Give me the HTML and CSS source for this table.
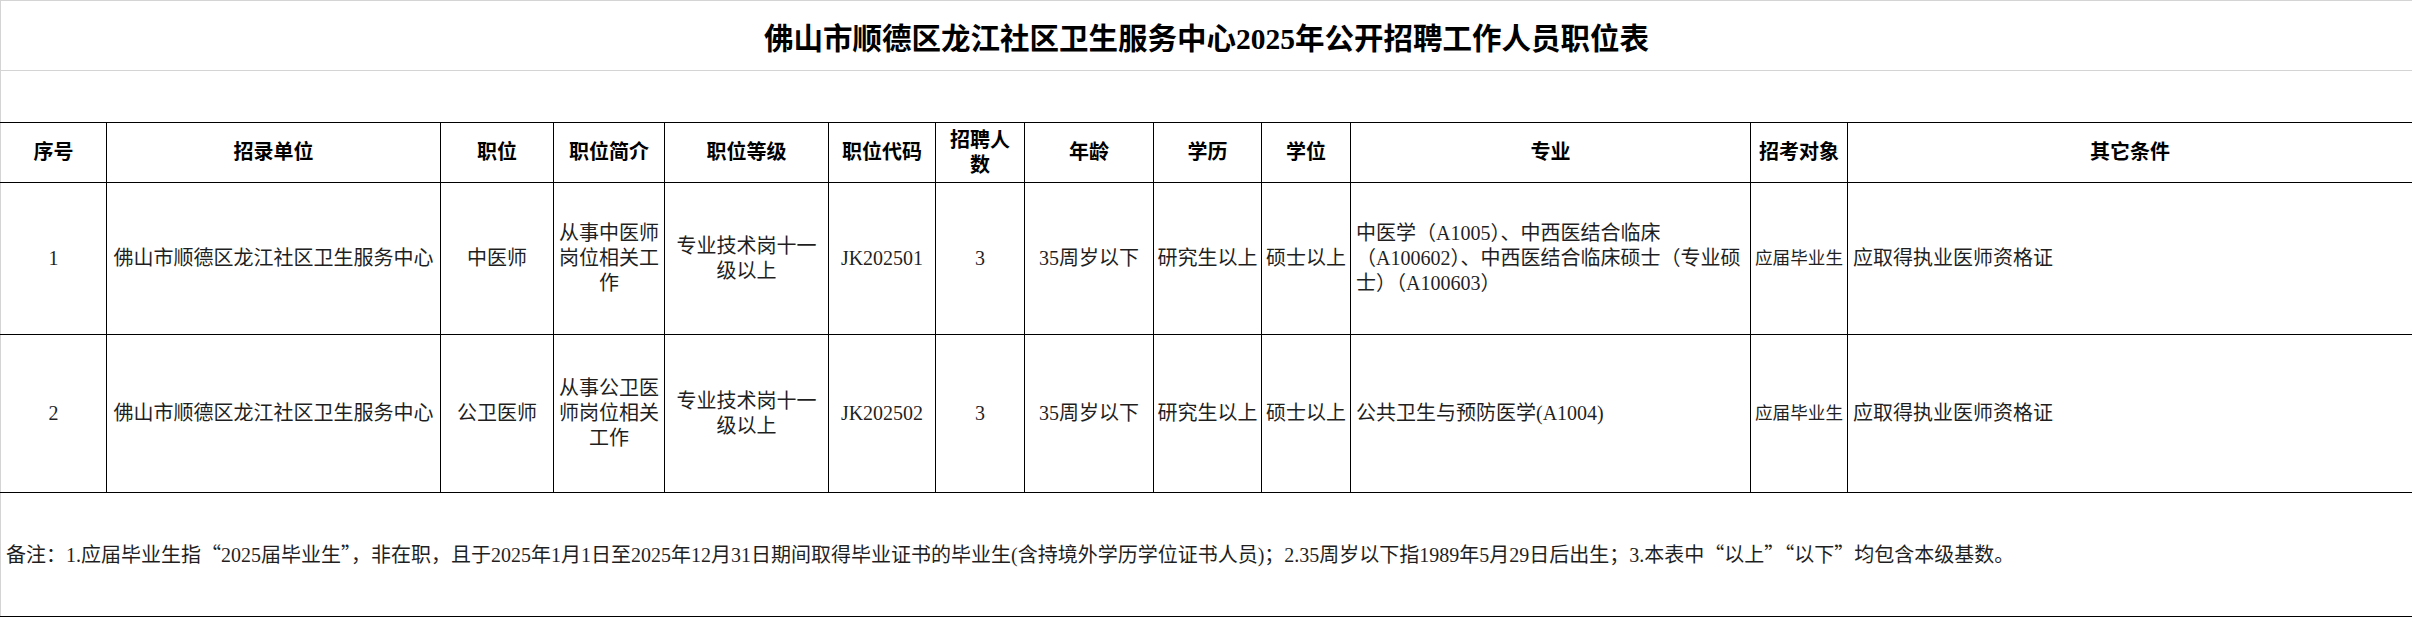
FILE: index.html
```html
<!DOCTYPE html>
<html lang="zh-CN">
<head>
<meta charset="utf-8">
<title>佛山市顺德区龙江社区卫生服务中心2025年公开招聘工作人员职位表</title>
<link rel="stylesheet" href="styles.css">
</head>
<body>
<table class="sheet">
  <colgroup>
    <col class="c-no">
    <col class="c-unit">
    <col class="c-post">
    <col class="c-desc">
    <col class="c-grade">
    <col class="c-code">
    <col class="c-num">
    <col class="c-age">
    <col class="c-edu">
    <col class="c-deg">
    <col class="c-major">
    <col class="c-target">
    <col class="c-other">
  </colgroup>
  <tr class="r-title">
    <td colspan="13" class="title">佛山市顺德区龙江社区卫生服务中心2025年公开招聘工作人员职位表</td>
  </tr>
  <tr class="r-blank">
    <td colspan="13" class="blank"></td>
  </tr>
  <tr class="r-head">
    <th class="first">序号</th>
    <th>招录单位</th>
    <th>职位</th>
    <th>职位简介</th>
    <th>职位等级</th>
    <th>职位代码</th>
    <th>招聘人<br>数</th>
    <th>年龄</th>
    <th>学历</th>
    <th>学位</th>
    <th>专业</th>
    <th>招考对象</th>
    <th>其它条件</th>
  </tr>
  <tr class="r-one">
    <td class="first">1</td>
    <td>佛山市顺德区龙江社区卫生服务中心</td>
    <td>中医师</td>
    <td>从事中医师<br>岗位相关工<br>作</td>
    <td>专业技术岗十一<br>级以上</td>
    <td>JK202501</td>
    <td>3</td>
    <td>35周岁以下</td>
    <td>研究生以上</td>
    <td>硕士以上</td>
    <td class="left">中医学（A1005）、中西医结合临床<br>（A100602）、中西医结合临床硕士（专业硕<br>士）（A100603）</td>
    <td class="shrink">应届毕业生</td>
    <td class="left">应取得执业医师资格证</td>
  </tr>
  <tr class="r-two">
    <td class="first">2</td>
    <td>佛山市顺德区龙江社区卫生服务中心</td>
    <td>公卫医师</td>
    <td>从事公卫医<br>师岗位相关<br>工作</td>
    <td>专业技术岗十一<br>级以上</td>
    <td>JK202502</td>
    <td>3</td>
    <td>35周岁以下</td>
    <td>研究生以上</td>
    <td>硕士以上</td>
    <td class="left">公共卫生与预防医学(A1004)</td>
    <td class="shrink">应届毕业生</td>
    <td class="left">应取得执业医师资格证</td>
  </tr>
  <tr class="r-note">
    <td colspan="13" class="first left note">备注：1.应届毕业生指<span class="q">“</span>2025届毕业生<span class="q">”</span>，非在职，且于2025年1月1日至2025年12月31日期间取得毕业证书的毕业生(含持境外学历学位证书人员)；2.35周岁以下指1989年5月29日后出生；3.本表中<span class="q">“</span>以上<span class="q">”“</span>以下<span class="q">”</span>均包含本级基数。</td>
  </tr>
</table>
</body>
</html>
```

FILE: styles.css
```css
html, body {
  margin: 0;
  padding: 0;
  background: #ffffff;
}

body {
  font-family: "Liberation Serif", "Noto Sans CJK SC", serif;
  color: #1f1f1f;
}

.sheet {
  border-collapse: collapse;
  table-layout: fixed;
  width: 2412px;
}

.c-no { width: 106px; }
.c-unit { width: 334px; }
.c-post { width: 113px; }
.c-desc { width: 111px; }
.c-grade { width: 164px; }
.c-code { width: 107px; }
.c-num { width: 89px; }
.c-age { width: 129px; }
.c-edu { width: 108px; }
.c-deg { width: 89px; }
.c-major { width: 400px; }
.c-target { width: 97px; }
.c-other { width: 565px; }

.sheet td,
.sheet th {
  border: 1px solid #000000;
  padding: 0 2px;
  font-size: 20px;
  line-height: 25px;
  text-align: center;
  vertical-align: middle;
  font-weight: normal;
  white-space: nowrap;
  overflow: visible;
}

.sheet th {
  font-weight: bold;
  color: #000000;
}

.r-title { height: 70px; }
.r-blank { height: 52px; }
.r-head { height: 60px; }
.r-one { height: 152px; }
.r-two { height: 158px; }
.r-note { height: 124px; }

.sheet .title {
  border: 1px solid #d4d4d4;
  font-size: 29.5px;
  line-height: 36px;
  font-weight: bold;
  color: #000000;
  padding-top: 6px;
}

.sheet .blank {
  border-left: 1px solid #d4d4d4;
  border-right: 1px solid #d4d4d4;
  border-top: 1px solid #d4d4d4;
  border-bottom: 1px solid #000000;
}

.sheet .first {
  border-left-color: #d4d4d4;
}

.sheet .left {
  text-align: left;
  padding-left: 5px;
}

.sheet .shrink {
  font-size: 17.6px;
  padding: 0 2px;
}

.q {
  font-family: "Noto Sans CJK SC", sans-serif;
  font-feature-settings: "fwid";
}

.note {
  padding-top: 6px;
}
```
